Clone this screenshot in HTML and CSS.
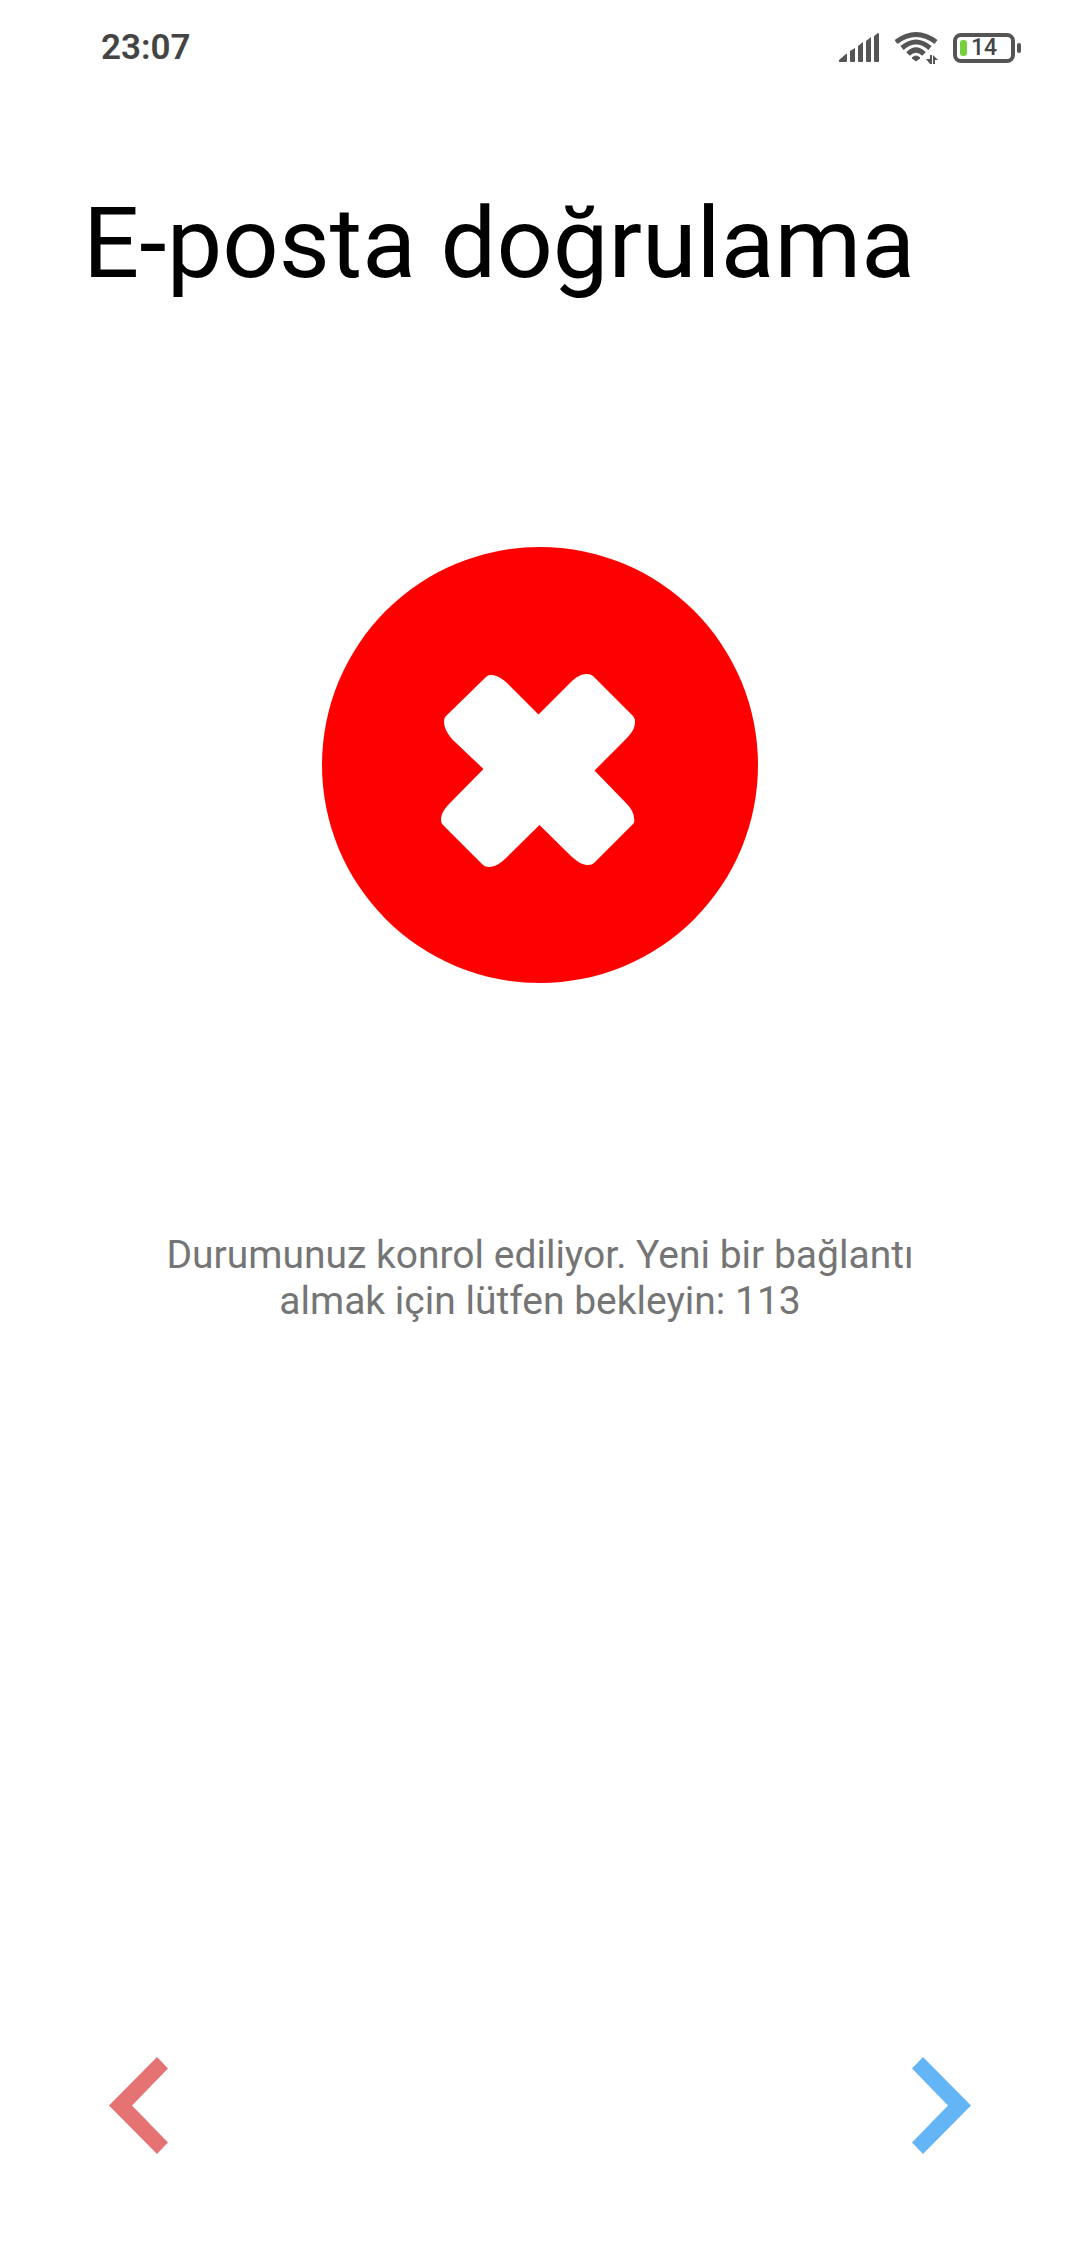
FILE: index.html
```html
<!DOCTYPE html>
<html lang="tr">
<head>
<meta charset="utf-8">
<meta name="viewport" content="width=device-width, initial-scale=1">
<title>E-posta doğrulama</title>
<link rel="stylesheet" href="styles.css">
</head>
<body class="screen">
<header class="status-bar">
  <time class="clock">23:07</time>
  <div class="indicators">
    <svg class="signal" width="41" height="30" viewBox="0 0 41 30" aria-hidden="true">
      <path d="M0 29v-2l7-6q1-1 1 0v7q0 1-1 1zM11 18l5-3v13q0 1-1 1h-3q-1 0-1-1zM19 13l5-4v19q0 1-1 1h-3q-1 0-1-1zM27 8l5-4v24q0 1-1 1h-3q-1 0-1-1zM35 3l4-3q1 0 1 1v27q0 1-1 1h-3q-1 0-1-1z"/>
    </svg>
    <svg class="wifi" width="43" height="34" viewBox="0 0 43 34" aria-hidden="true">
      <path class="wave" d="M1 11Q21 -4 41 11M7 17Q21 5 35 17M13 23Q21 15 29 23"/>
      <path d="M21 30l-4-3q4-4 8 0z" stroke="#555" stroke-linejoin="round"/>
      <path d="M35 33v-9h2v9zM31 28h5l-1 5zM38 33v-9l5 5h-3v4z"/>
    </svg>
    <div class="battery">
      <span class="charge"></span>
      <span class="level">14</span>
    </div>
    <span class="battery-tip"></span>
  </div>
</header>
<main class="content">
  <h1 class="title">E-posta doğrulama</h1>
  <svg class="result-icon" viewBox="0 0 436 436" role="img" aria-label="Doğrulanmadı">
    <circle cx="218" cy="218" r="218" fill="#f00"/>
    <path fill="#fff" d="M216.500 167.500L184 135C177 129 173 128 168 128Q166 128 164 130L123 170Q122 172 122 175C122 180 125 187 132 194L161.500 222L128 256C121 263 119 268 119 273Q119 276 121 278L161 318Q163 320 167 320C173 320 179 316 184 311L217.500 278L250 310C257 316 261 318 266 318Q270 318 272 316L311 277Q313 275 312 271C312 266 309 261 304 256L272.500 223.500L303 193C310 186 313 181 313 175Q313 171 311 169L271 129Q269 127 265 127C259 127 254 130 249 135Z"/>
  </svg>
  <p class="message">Durumunuz konrol ediliyor. Yeni bir bağlantı almak için lütfen bekleyin: 113</p>
</main>
<nav class="pager">
  <button class="arrow back" type="button" aria-label="Geri">
    <svg width="60" height="97" viewBox="0 0 60 97"><path d="M49 0L60 11.500L24 48.500L60 85.500L49 97L1 48.500Z"/></svg>
  </button>
  <button class="arrow next" type="button" aria-label="İleri">
    <svg width="60" height="97" viewBox="0 0 60 97"><path d="M11 0L0 11.500L36 48.500L0 85.500L11 97L59 48.500Z"/></svg>
  </button>
</nav>
</body>
</html>
```
FILE: styles.css
```css
* {
  box-sizing: border-box;
}

.screen {
  display: flex;
  flex-direction: column;
  min-height: 100vh;
  margin: 0;
  background: #fff;
  font-family: Roboto, "Liberation Sans", sans-serif;
}

.status-bar {
  display: flex;
  align-items: center;
  justify-content: space-between;
  height: 96px;
  padding: 0 59px 0 101px;
}

.clock {
  color: #444;
  font-size: 35px;
  font-weight: 600;
  line-height: 40px;
}

.indicators {
  display: flex;
  align-items: center;
  height: 34px;
}

.indicators svg {
  fill: #555;
}

.signal {
  margin-right: 15px;
}

.wifi {
  margin-right: 15px;
}

.wave {
  fill: none;
  stroke: #555;
  stroke-width: 5;
}

.battery {
  display: flex;
  align-items: center;
  gap: 4px;
  width: 62px;
  height: 30px;
  padding: 0 3px;
  border: 4px solid #555;
  border-radius: 8px;
}

.charge {
  width: 7px;
  height: 16px;
  border-radius: 3px;
  background: #76d03d;
}

.level {
  color: #444;
  font-size: 23px;
  font-weight: 500;
  line-height: 22px;
}

.battery-tip {
  width: 4px;
  height: 10px;
  margin-left: 2px;
  border-radius: 2px;
  background: #555;
}

.content {
  display: flex;
  flex: 1;
  flex-direction: column;
  align-items: center;
  padding: 89px 83px 0;
}

.title {
  align-self: stretch;
  margin: 0;
  color: #000;
  font-size: 99px;
  font-weight: 400;
  line-height: 116px;
}

.result-icon {
  width: 436px;
  height: 436px;
  margin-top: 246px;
}

.message {
  max-width: 800px;
  margin: 249px 0 0;
  color: #757575;
  font-size: 39px;
  line-height: 46px;
  text-align: center;
}

.pager {
  display: flex;
  justify-content: space-between;
  padding: 0 108px 92px;
}

.arrow {
  display: flex;
  padding: 0;
  border: 0;
  background: none;
}

.back {
  fill: #e57373;
}

.next {
  fill: #64b5f6;
}
```
